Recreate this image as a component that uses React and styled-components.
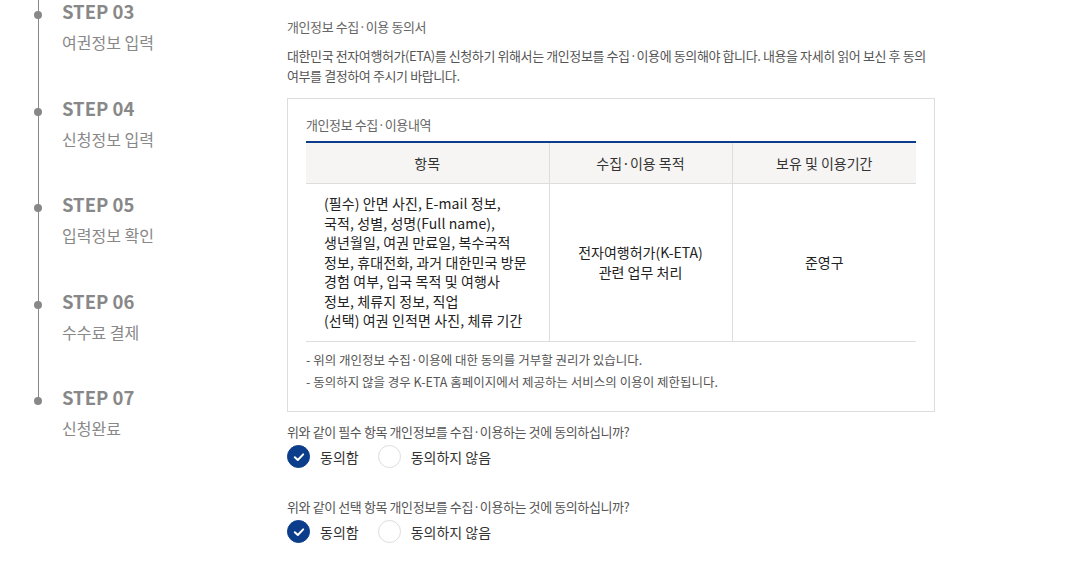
import React from "react";
import styled, { createGlobalStyle } from "styled-components";

const GlobalStyle = createGlobalStyle`
  body {
    margin: 0;
    background: #fff;
    font-family: "Noto Sans CJK KR", "Noto Sans", sans-serif;
  }
`;

const steps = [
  { no: "03", name: "여권정보 입력" },
  { no: "04", name: "신청정보 입력" },
  { no: "05", name: "입력정보 확인" },
  { no: "06", name: "수수료 결제" },
  { no: "07", name: "신청완료" },
];

const items = [
  "(필수) 안면 사진, E-mail 정보,",
  "국적, 성별, 성명(Full name),",
  "생년월일, 여권 만료일, 복수국적",
  "정보, 휴대전화, 과거 대한민국 방문",
  "경험 여부, 입국 목적 및 여행사",
  "정보, 체류지 정보, 직업",
  "(선택) 여권 인적면 사진, 체류 기간",
];

const App = () => {
  return (
    <>
      <GlobalStyle />
      <Page>
        <Sidebar>
          <StepList>
            {steps.map((s) => (
              <Step key={s.no}>
                <StepNo>STEP {s.no}</StepNo>
                <StepName>{s.name}</StepName>
              </Step>
            ))}
          </StepList>
        </Sidebar>

        <Main>
          <Title>개인정보 수집·이용 동의서</Title>
          <Intro>
            대한민국 전자여행허가(ETA)를 신청하기 위해서는 개인정보를 수집·이용에 동의해야 합니다. 내용을 자세히 읽어 보신 후 동의
            여부를 결정하여 주시기 바랍니다.
          </Intro>

          <AgreeBox>
            <Caption>개인정보 수집·이용내역</Caption>
            <Table>
              <colgroup>
                <col style={{ width: 243 }} />
                <col style={{ width: 183 }} />
                <col />
              </colgroup>
              <thead>
                <tr>
                  <Th>항목</Th>
                  <Th>수집·이용 목적</Th>
                  <Th>보유 및 이용기간</Th>
                </tr>
              </thead>
              <tbody>
                <tr>
                  <Td $left>
                    {items.map((line) => (
                      <ItemLine key={line}>{line}</ItemLine>
                    ))}
                  </Td>
                  <Td>
                    전자여행허가(K-ETA)
                    <br />
                    관련 업무 처리
                  </Td>
                  <Td>준영구</Td>
                </tr>
              </tbody>
            </Table>
            <Notes>
              <li>- 위의 개인정보 수집·이용에 대한 동의를 거부할 권리가 있습니다.</li>
              <li>- 동의하지 않을 경우 K-ETA 홈페이지에서 제공하는 서비스의 이용이 제한됩니다.</li>
            </Notes>
          </AgreeBox>

          <Question>위와 같이 필수 항목 개인정보를 수집·이용하는 것에 동의하십니까?</Question>
          <RadioRow>
            <Radio checked label="동의함" />
            <Radio label="동의하지 않음" />
          </RadioRow>

          <Question $spaced>위와 같이 선택 항목 개인정보를 수집·이용하는 것에 동의하십니까?</Question>
          <RadioRow>
            <Radio checked label="동의함" />
            <Radio label="동의하지 않음" />
          </RadioRow>
        </Main>
      </Page>
    </>
  );
};

const Radio = ({ checked, label }) => (
  <Option>
    <Circle $checked={checked}>
      {checked && (
        <svg width="14" height="14" viewBox="0 0 14 14">
          <path
            d="M2.8 7.2 L5.8 10 L11.2 4.4"
            fill="none"
            stroke="#fff"
            strokeWidth="2"
            strokeLinecap="round"
            strokeLinejoin="round"
          />
        </svg>
      )}
    </Circle>
    <OptionLabel>{label}</OptionLabel>
  </Option>
);

export default App;

const Page = styled.div`
  display: flex;
  width: 1089px;
  height: 575px;
  overflow: hidden;
`;

const Sidebar = styled.aside`
  width: 287px;
  flex-shrink: 0;
  padding-left: 62px;
  box-sizing: border-box;
`;

const StepList = styled.ol`
  position: relative;
  list-style: none;
  margin: -1px 0 0;
  padding: 0;

  &::before {
    content: "";
    position: absolute;
    left: -24.5px;
    top: 0;
    bottom: 39px;
    width: 1.5px;
    background: #888;
  }
`;

const Step = styled.li`
  position: relative;
  height: 55px;
  margin-bottom: 41.5px;

  &:last-child {
    margin-bottom: 0;
  }

  &::before {
    content: "";
    position: absolute;
    left: -28px;
    top: 12px;
    width: 8px;
    height: 8px;
    border-radius: 50%;
    background: #888;
  }
`;

const StepNo = styled.div`
  font-size: 18.5px;
  line-height: 24px;
  font-weight: 700;
  color: #888;
`;

const StepName = styled.div`
  margin-top: 7px;
  font-size: 16px;
  line-height: 24px;
  color: #888;
`;

const Main = styled.main`
  width: 648px;
  padding-top: 17px;
`;

const Title = styled.h2`
  margin: 0 0 9px;
  font-size: 13px;
  line-height: 20px;
  font-weight: 400;
  color: #666;
  letter-spacing: -0.4px;
`;

const Intro = styled.p`
  margin: 0;
  font-size: 13px;
  line-height: 20px;
  color: #555;
  letter-spacing: -0.4px;
`;

const AgreeBox = styled.section`
  margin-top: 12px;
  border: 1px solid #ddd;
  padding: 16px 18px 18px;
`;

const Caption = styled.div`
  font-size: 13px;
  line-height: 20px;
  color: #666;
  letter-spacing: -0.4px;
  margin-bottom: 6px;
`;

const Table = styled.table`
  width: 100%;
  border-collapse: collapse;
  table-layout: fixed;
  border-top: 2px solid #0b3d8b;
`;

const Th = styled.th`
  height: 40px;
  padding: 0;
  background: #f6f5f4;
  font-size: 14px;
  font-weight: 400;
  color: #333;
  border-bottom: 1px solid #ddd;
  border-left: 1px solid #ddd;

  &:first-child {
    border-left: 0;
  }
`;

const Td = styled.td`
  height: 157px;
  box-sizing: border-box;
  padding: ${(p) => (p.$left ? "10px 0 10px 18px" : "0")};
  text-align: ${(p) => (p.$left ? "left" : "center")};
  vertical-align: middle;
  font-size: 14px;
  line-height: 20px;
  color: #222;
  border-bottom: 1px solid #ddd;
  border-left: 1px solid #ddd;

  &:first-child {
    border-left: 0;
  }
`;

const ItemLine = styled.div`
  white-space: nowrap;
  line-height: 19.5px;
  letter-spacing: 0.1px;
`;

const Notes = styled.ul`
  list-style: none;
  margin: 0;
  padding: 7px 0 0;

  li {
    font-size: 12.5px;
    line-height: 22px;
    color: #555;
  }
`;

const Question = styled.p`
  margin: ${(p) => (p.$spaced ? "28px" : "10px")} 0 3px;
  font-size: 13px;
  line-height: 20px;
  color: #555;
  letter-spacing: -0.4px;
`;

const RadioRow = styled.div`
  display: flex;
  align-items: center;
  gap: 19px;
`;

const Option = styled.label`
  display: flex;
  align-items: center;
  gap: 10px;
  cursor: pointer;
`;

const Circle = styled.span`
  display: inline-flex;
  align-items: center;
  justify-content: center;
  width: 23px;
  height: 23px;
  box-sizing: border-box;
  border-radius: 50%;
  background: ${(p) => (p.$checked ? "#0b3d8b" : "#fff")};
  border: 1px solid ${(p) => (p.$checked ? "#0b3d8b" : "#ddd")};
`;

const OptionLabel = styled.span`
  font-size: 14px;
  line-height: 24px;
  color: #333;
`;
